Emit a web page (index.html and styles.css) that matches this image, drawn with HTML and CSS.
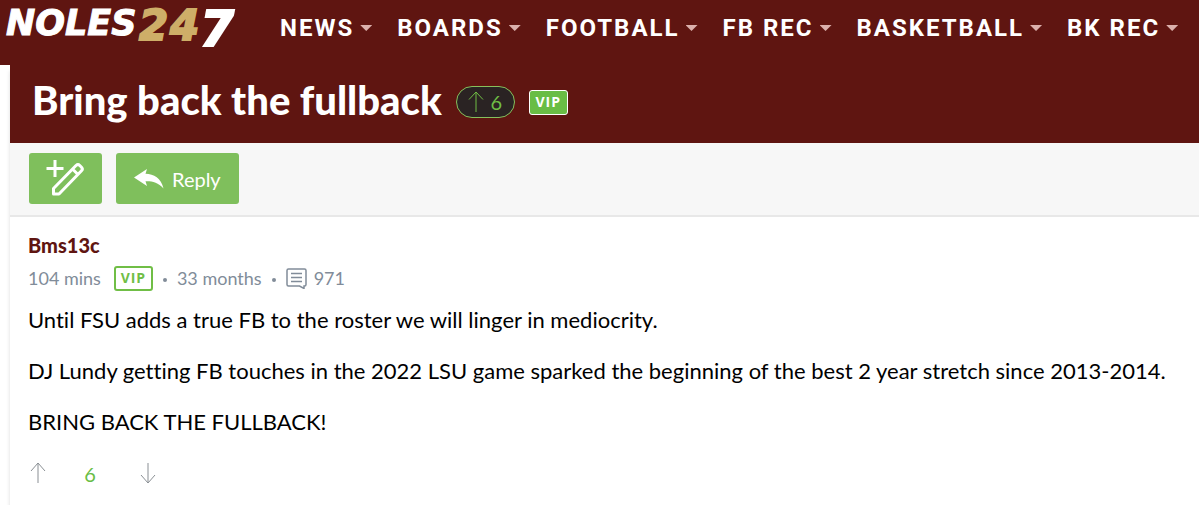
FILE: index.html
```html
<!DOCTYPE html>
<html lang="en">
<head>
<meta charset="utf-8">
<meta name="viewport" content="width=device-width, initial-scale=1">
<title>Bring back the fullback</title>
<link rel="stylesheet" href="styles.css">
</head>
<body>
<header class="site-header">
  <a class="logo" href="#" aria-label="Noles247">
    <svg class="logo-art" viewBox="0 0 250 56" aria-hidden="true">
      <text class="logo-name" x="6" y="35">NOLES</text>
      <text class="logo-gold" x="139" y="40">2</text>
      <text class="logo-gold" x="170" y="40">4</text>
      <text class="logo-seven" x="200" y="46">7</text>
    </svg>
  </a>
  <nav class="nav" aria-label="Main">
    <a class="nav-item" href="#">NEWS</a>
    <a class="nav-item" href="#">BOARDS</a>
    <a class="nav-item" href="#">FOOTBALL</a>
    <a class="nav-item" href="#">FB REC</a>
    <a class="nav-item" href="#">BASKETBALL</a>
    <a class="nav-item" href="#">BK REC</a>
  </nav>
</header>
<main class="thread">
  <div class="thread-head">
    <h1 class="title">Bring back the fullback</h1>
    <span class="score">
      <svg class="score-arrow" viewBox="0 0 16 22" aria-hidden="true"><path d="M8 21V1M1 8.500L8 1l7 7.500"/></svg>
      6
    </span>
    <span class="vip vip-solid">VIP</span>
  </div>
  <div class="toolbar">
    <button class="btn btn-compose" type="button" aria-label="New topic">
      <svg class="icon-compose" viewBox="0 0 40 38" aria-hidden="true"><path d="M10 0v17M1.500 8.500h17M8.500 34v-5.500L31 5.500q2-1.800 3.800 0l1.700 1.700q1.700 1.800 0 3.600L14 34zM27.500 9l5.500 5.500"/></svg>
    </button>
    <button class="btn btn-reply" type="button">
      <svg class="icon-reply" viewBox="0 0 30 20" aria-hidden="true"><path d="M0 8.500L13 0l-1.500 4.800C20 5 27 9 29.500 19.500 24 13.500 18 12 11.500 12.300L13 17z"/></svg>
      Reply
    </button>
  </div>
  <article class="post">
    <a class="author" href="#">Bms13c</a>
    <div class="meta">
      <span>104 mins</span>
      <span class="vip vip-outline">VIP</span>
      <span class="dot"></span>
      <span>33 months</span>
      <span class="dot"></span>
      <span class="count">
        <svg class="icon-comment" viewBox="0 0 21 21" aria-hidden="true"><path d="M2.500 1h16Q20 1 20 2.500v14q0 1.500-1.500 1.500H18v2.500L13.500 18H2.500Q1 18 1 16.500v-14Q1 1 2.500 1zM5 5.500h11M5 9.500h11M5 13.500h11"/></svg>
        971
      </span>
    </div>
    <div class="body">
      <p>Until FSU adds a true FB to the roster we will linger in mediocrity.</p>
      <p>DJ Lundy getting FB touches in the 2022 LSU game sparked the beginning of the best 2 year stretch since 2013-2014.</p>
      <p>BRING BACK THE FULLBACK!</p>
    </div>
    <div class="votes">
      <button class="vote" type="button" aria-label="Upvote"><svg class="vote-arrow" viewBox="0 0 16 22" aria-hidden="true"><path d="M8 21V1M1 9l7-8 7 8"/></svg></button>
      <span class="vote-count">6</span>
      <button class="vote" type="button" aria-label="Downvote"><svg class="vote-arrow" viewBox="0 0 16 22" aria-hidden="true"><path d="M8 1v20M1 13l7 8 7-8"/></svg></button>
    </div>
  </article>
</main>
</body>
</html>
```
FILE: styles.css
```css
* { box-sizing: border-box; }
body {
  margin: 0;
  background: #fff;
  color: #000;
  font-family: Lato, "Open Sans", sans-serif;
  font-size: 20px;
  font-variant-ligatures: none;
}
a { text-decoration: none; }
svg { display: block; flex: none; fill: none; stroke: currentColor; }

.site-header {
  display: flex;
  align-items: flex-start;
  height: 65px;
  background: #5f1511;
}
.logo { flex: none; width: 250px; }
.logo-art { width: 250px; height: 56px; }
.logo-art text {
  font-family: "DejaVu Sans", sans-serif;
  font-weight: bold;
  font-style: italic;
  stroke-width: 2;
}
.logo-art .logo-name { font-size: 35px; fill: #fff; stroke: #fff; stroke-width: 1; }
.logo-gold { font-size: 42px; fill: #ceae68; stroke: #ceae68; }
.logo-seven { font-size: 49px; fill: #fff; stroke: #fff; }
.nav {
  display: flex;
  gap: 25px;
  height: 56px;
  margin-left: 30px;
  align-items: center;
}
.nav-item {
  display: flex;
  align-items: center;
  gap: 6px;
  color: #fff;
  font: bold 24px/32px Roboto, sans-serif;
  letter-spacing: 2px;
  white-space: nowrap;
}
.nav-item::after {
  content: "";
  width: 12px;
  height: 6px;
  background: #dbb0ac;
  clip-path: polygon(0 0, 100% 0, 50% 100%);
}

.thread {
  margin-left: 10px;
  min-height: 440px;
  box-shadow: 0 6px 4px #ddd;
}
.thread-head {
  display: flex;
  align-items: center;
  height: 78px;
  padding: 0 22px 4px;
  background: #5f1511;
}
.title {
  margin: 0;
  padding-bottom: 4px;
  color: #fff;
  font-size: 40px;
  line-height: 48px;
  font-weight: 900;
}
.score {
  display: flex;
  align-items: center;
  justify-content: center;
  gap: 6px;
  width: 59px;
  height: 32px;
  margin-left: 14px;
  border: 1px solid #86c05c;
  border-radius: 16px;
  background: #2a2323;
  color: #6fbd45;
}
.score-arrow { width: 16px; height: 22px; }
.vip {
  display: flex;
  align-items: center;
  justify-content: center;
  width: 39px;
  height: 25px;
  border: 2px solid #70be46;
  border-radius: 3px;
  color: #70be46;
  font: bold 14px/20px "Open Sans", sans-serif;
  letter-spacing: 1px;
}
.vip-solid {
  margin-left: 14px;
  border: 1px solid #fff;
  background: #69bd45;
  color: #fff;
}
.toolbar {
  display: flex;
  gap: 14px;
  padding: 10px 19px 11px;
  border-bottom: 2px solid #e8e8e8;
  background: #f7f7f7;
}
.btn {
  display: flex;
  align-items: center;
  height: 51px;
  padding: 0 18px;
  border: 0;
  border-radius: 3px;
  background: #7fbf5c;
  color: #fff;
  font: inherit;
}
.btn-compose { width: 73px; padding: 0 16px; }
.btn-reply { gap: 8px; }
.icon-compose { width: 40px; height: 38px; stroke-width: 3; stroke-linejoin: round; overflow: visible; }
.icon-reply { width: 30px; height: 20px; fill: #fff; stroke: none; }

.post { padding: 15px 18px; }
.author {
  display: block;
  color: #5f1511;
  line-height: 26px;
  font-weight: 900;
}
.meta {
  display: flex;
  align-items: center;
  height: 40px;
  color: #818c99;
  font-size: 18px;
}
.vip-outline { margin-left: 13px; }
.dot {
  width: 4px;
  height: 4px;
  margin: 4px 10px 0;
  border-radius: 50%;
  background: #818c99;
}
.count { display: flex; align-items: center; gap: 7px; }
.icon-comment { width: 21px; height: 21px; stroke-width: 1.500; }
.body { padding-top: 9px; font-size: 22px; line-height: 26px; }
.body p { margin: 0 0 25px; }
.votes { display: flex; align-items: center; }
.vote {
  width: 20px;
  padding: 0 2px;
  border: 0;
  background: none;
  color: #8a8f94;
}
.vote-arrow { width: 16px; height: 22px; }
.vote-count { width: 90px; padding: 2px 6px 0 0; text-align: center; color: #69bd45; }
```
